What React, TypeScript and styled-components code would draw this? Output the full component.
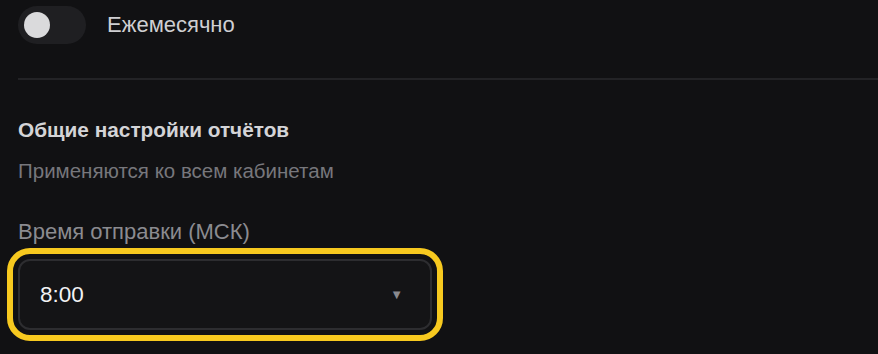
import React, { useState } from "react";
import styled, { createGlobalStyle } from "styled-components";

const GlobalStyle = createGlobalStyle`
  html, body {
    margin: 0;
    padding: 0;
    background: #111113;
    font-family: "Liberation Sans", Arial, sans-serif;
    -webkit-font-smoothing: antialiased;
  }
`;

const Page = styled.main`
  width: 878px;
  height: 354px;
  overflow: hidden;
  box-sizing: border-box;
  padding: 6px 0 0 18px;
  background: #111113;
`;

const ToggleRow = styled.label`
  display: flex;
  align-items: center;
  gap: 21px;
  height: 38px;
`;

const Track = styled.span<{ $on: boolean }>`
  position: relative;
  width: 68px;
  height: 38px;
  border-radius: 19px;
  background: ${(p) => (p.$on ? "#f5c518" : "#1f1f22")};
  flex-shrink: 0;
`;

const Knob = styled.span<{ $on: boolean }>`
  position: absolute;
  top: 6px;
  left: ${(p) => (p.$on ? "36px" : "6px")};
  width: 26px;
  height: 26px;
  border-radius: 50%;
  background: #dadadc;
`;

const ToggleText = styled.span`
  font-size: 22px;
  color: #cfcfd2;
`;

const Divider = styled.hr`
  border: none;
  height: 2px;
  background: #232326;
  margin: 34px 0 0 0;
`;

const Section = styled.section`
  padding-top: 38px;
`;

const Heading = styled.h3`
  margin: 0;
  font-size: 20.8px;
  font-weight: 700;
  color: #d4d4d7;
  line-height: 24px;
`;

const Hint = styled.p`
  margin: 17px 0 0 0;
  font-size: 20.5px;
  line-height: 24px;
  color: #77777c;
`;

const FieldLabel = styled.div`
  margin-top: 37px;
  font-size: 22px;
  line-height: 24px;
  color: #8b8b90;
`;

const SelectBox = styled.div`
  margin-top: 15px;
  width: 414px;
  height: 71px;
  box-sizing: border-box;
  border: 2px solid #2d2d30;
  border-radius: 12px;
  background: #141416;
  outline: 6px solid #f7c91f;
  outline-offset: 5px;
  display: flex;
  align-items: center;
  justify-content: space-between;
  padding: 0 27px 0 20px;
`;

const SelectValue = styled.span`
  font-size: 22.5px;
  color: #f2f2f4;
`;

const Caret = styled.span`
  font-size: 13px;
  color: #8a8a8f;
`;

export default function App() {
  const [monthly, setMonthly] = useState(false);
  return (
    <>
      <GlobalStyle />
      <Page>
        <ToggleRow onClick={() => setMonthly((v) => !v)}>
          <Track $on={monthly}>
            <Knob $on={monthly} />
          </Track>
          <ToggleText>Ежемесячно</ToggleText>
        </ToggleRow>
        <Divider />
        <Section>
          <Heading>Общие настройки отчётов</Heading>
          <Hint>Применяются ко всем кабинетам</Hint>
          <FieldLabel>Время отправки (МСК)</FieldLabel>
          <SelectBox>
            <SelectValue>8:00</SelectValue>
            <Caret>▼</Caret>
          </SelectBox>
        </Section>
      </Page>
    </>
  );
}
